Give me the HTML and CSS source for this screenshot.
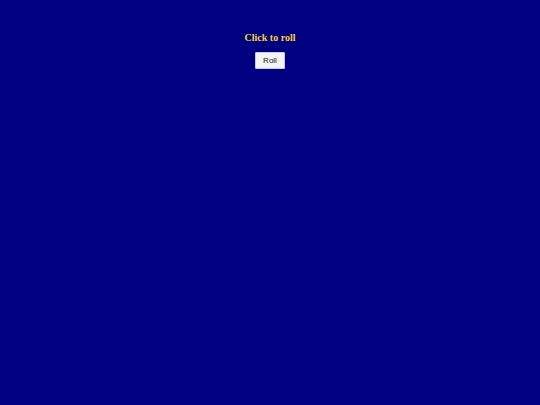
FILE: index.html
```html
<!doctype html>
<html>
<head>
<meta charset="utf-8">
<link rel="stylesheet" href="styles.css">
<title>Dice</title>
</head>
<body>
<div id="game">
	<h1 id="msg">Click to roll</h1>
	<button id="roll">Roll</button>
</div>
</body>
</html>
```

FILE: styles.css
```css
body
{
	margin:0;
	background-color:#000080;
	font-family:"Liberation Serif", serif;
}
#game
{
	display:flex;
	flex-direction:column;
	align-items:center;
	padding-top:32px;
}
#msg
{
	margin:0;
	font-size:10px;
	color:#f8d038;
}
#roll
{
	margin-top:9px;
	width:30px;
	height:17px;
	padding:0;
	font-family:"Liberation Sans", sans-serif;
	font-size:8px;
	color:#202020;
	background-color:#f4f4f4;
	border:1px solid #c8c8d8;
	border-radius:1px;
}
```
